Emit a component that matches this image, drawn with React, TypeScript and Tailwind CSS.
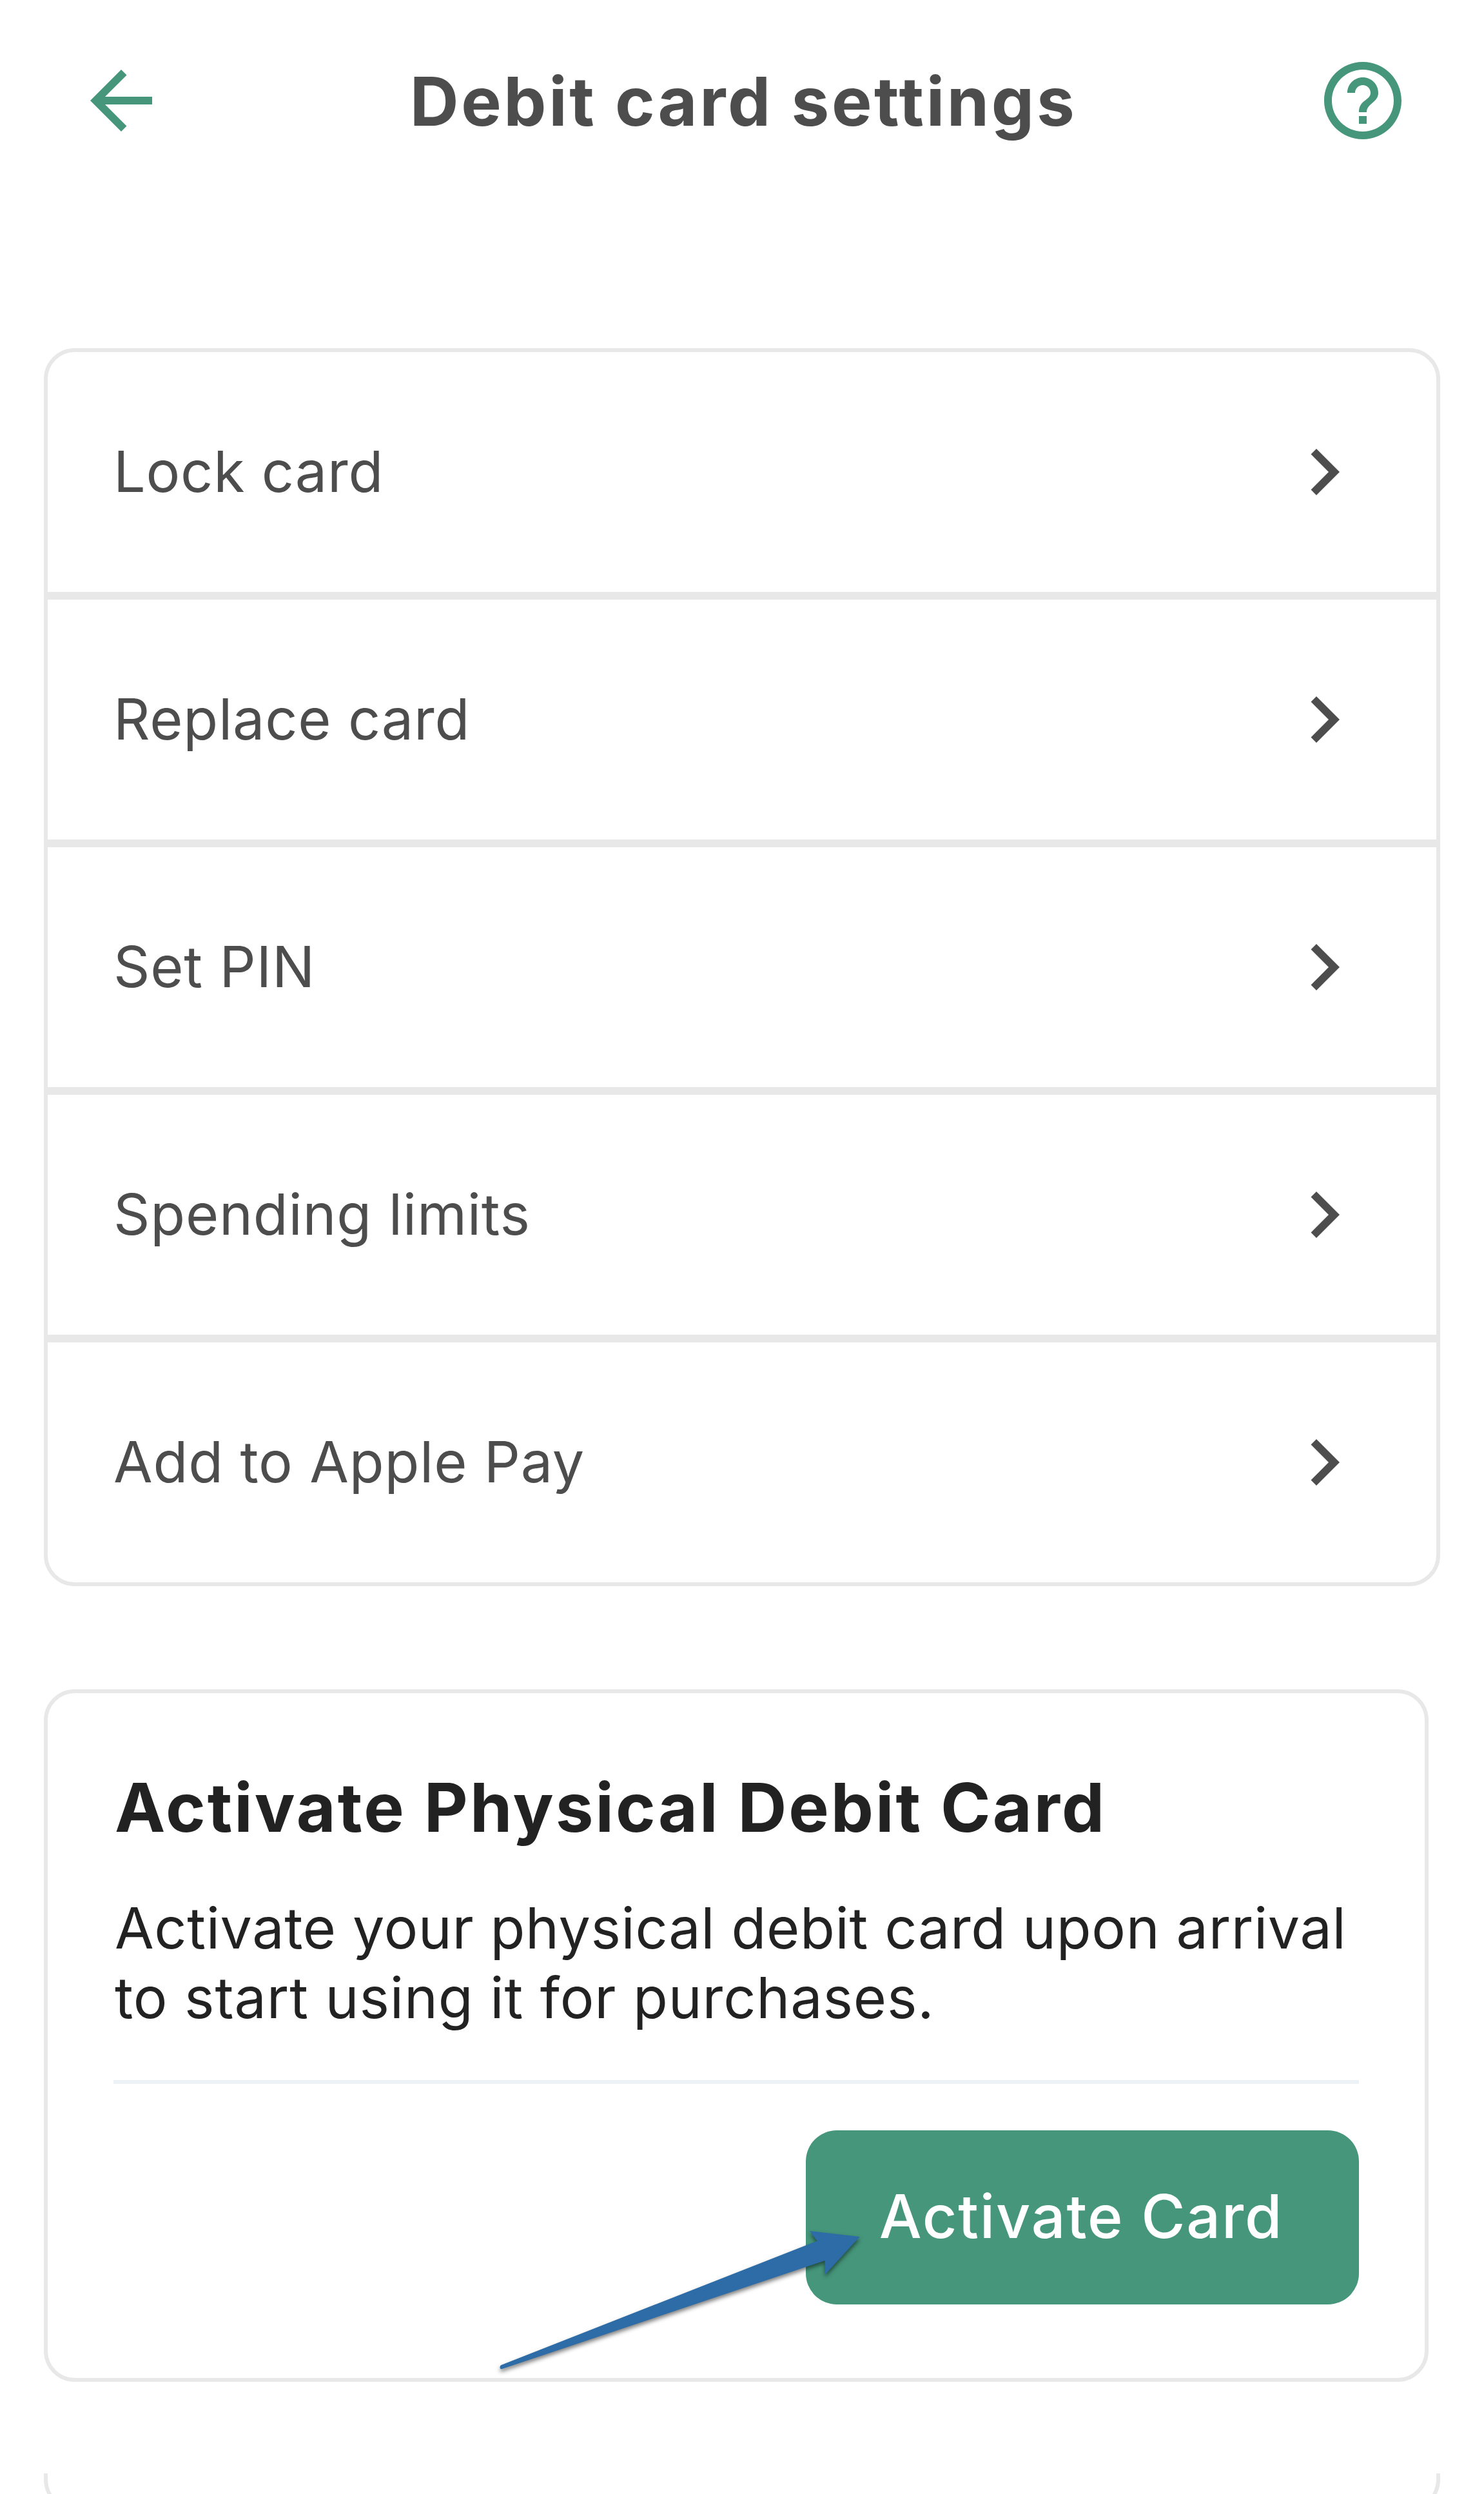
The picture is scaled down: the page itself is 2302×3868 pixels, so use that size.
import React from "react";

const menuItems = ["Lock card", "Replace card", "Set PIN", "Spending limits", "Add to Apple Pay"];

const BackIcon = () => (
  <svg viewBox="0 0 24 24" className="h-36 w-36" fill="currentColor">
    <path d="M20 11H7.83l5.59-5.59L12 4l-8 8 8 8 1.41-1.41L7.83 13H20v-2z" />
  </svg>
);

const HelpIcon = () => (
  <svg viewBox="0 0 24 24" className="h-36 w-36" fill="currentColor">
    <path d="M11 18h2v-2h-2v2zm1-16C6.48 2 2 6.48 2 12s4.48 10 10 10 10-4.48 10-10S17.52 2 12 2zm0 18c-4.41 0-8-3.59-8-8s3.59-8 8-8 8 3.59 8 8-3.59 8-8 8zm0-14c-2.21 0-4 1.79-4 4h2c0-1.1.9-2 2-2s2 .9 2 2c0 2-3 1.75-3 5h2c0-2.25 3-2.5 3-5 0-2.21-1.79-4-4-4z" />
  </svg>
);

const ChevronIcon = () => (
  <svg viewBox="0 0 24 24" className="h-36 w-36" fill="currentColor">
    <path d="M10 6L8.59 7.41 13.17 12l-4.58 4.59L10 18l6-6z" />
  </svg>
);

/** Arrow that points at the activate button */
const PointerArrow = () => (
  <svg
    viewBox="0 0 580 230"
    className="pointer-events-none absolute top-[146px] -left-[484px] h-[230px] w-[580px] overflow-visible drop-shadow-[0_4px_3px_rgba(0,0,0,0.5)]"
  >
    <path
      d="M9.5 221Q9.5 218.8 11.5 218L501.5 25.5 490 10 567.7 19 514 77.5 513.5 56 13 224Q9.5 225 9.5 221Z"
      fill="#2d6ca6"
    />
  </svg>
);

interface MenuRowProps {
  label: string;
}

const MenuRow: React.FC<MenuRowProps> = ({ label }) => (
  <button className="flex h-96 w-full items-center justify-between border-6 border-[#e8e8e8] pr-[102px] pl-[102px] text-[88px] tracking-[0.009em] text-[#4d4d4d] first:rounded-t-[48px] last:rounded-b-[48px]">
    <span className="pb-[3px]">{label}</span>
    <ChevronIcon />
  </button>
);

export default function App() {
  return (
    <div className="h-[3868px] w-[2302px] overflow-hidden bg-white font-['Inter',sans-serif]">
      {/* Header */}
      <header className="flex h-[312px] items-center justify-between pr-[116px] pl-[116px] text-[#45967b]">
        <BackIcon />
        <h1 className="pt-0.5 pl-1 text-[105px] font-bold tracking-[0.035em] whitespace-nowrap text-[#4d4d4d]">
          Debit card settings
        </h1>
        <HelpIcon />
      </header>

      <main className="mt-[228px] pr-[68px] pl-[68px]">
        {/* Settings menu */}
        <nav>
          {menuItems.map((label) => (
            <MenuRow key={label} label={label} />
          ))}
        </nav>

        {/* Activate card */}
        <section className="mt-40 h-[1074px] w-[2148px] rounded-[48px] border-6 border-[#e8e8e8] px-[102px] pt-[107px] text-[#222222]">
          <h2 className="pl-0.5 text-[105px] leading-[140px] font-bold tracking-[0.029em] whitespace-nowrap">
            Activate Physical Debit Card
          </h2>
          <p className="mt-[63px] pl-0.5 text-[88px] leading-[108px] tracking-[0.007em] whitespace-nowrap">
            Activate your physical debit card upon arrival
            <br />
            <span className="tracking-[0.01em]">to start using it for purchases.</span>
          </p>
          <div className="mt-[74px] h-1.5 bg-[#edf2f6]" />
          <div className="mt-18 flex justify-end">
            <div className="relative">
              <button className="h-[270px] w-[858px] rounded-[48px] bg-[#45967b] pr-1 pb-0.5 text-[93px] font-medium tracking-[0.02em] whitespace-nowrap text-white">
                Activate Card
              </button>
              <PointerArrow />
            </div>
          </div>
        </section>

        {/* Next card, cut off by the viewport */}
        <section className="mt-[142px] h-[58px] rounded-b-[48px] border-6 border-t-0 border-[#e8e8e8]" />
      </main>
    </div>
  );
}
